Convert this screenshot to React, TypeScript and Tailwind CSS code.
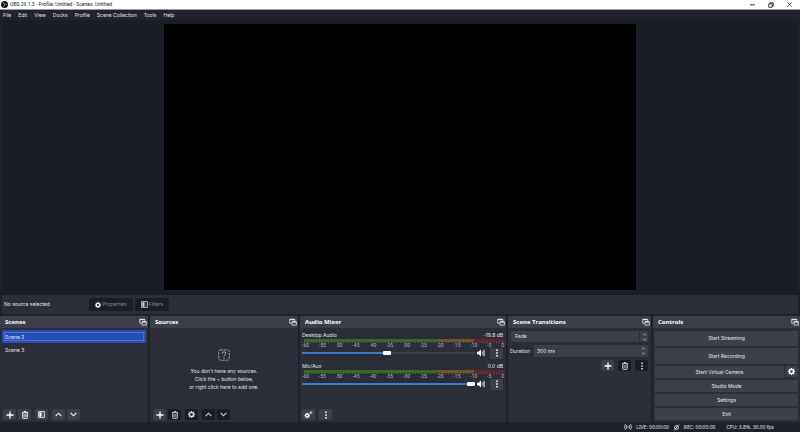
import type { ReactNode } from "react";
import { useState } from "react";
import { clsx } from "clsx";

const menus = ["File", "Edit", "View", "Docks", "Profile", "Scene Collection", "Tools", "Help"];
const meterMarks = ["-60", "-55", "-50", "-45", "-40", "-35", "-30", "-25", "-20", "-15", "-10", "-5", "0"];

function Icon({ className = "size-[7px]", children }: { className?: string; children: ReactNode }) {
  return (
    <svg
      viewBox="0 0 16 16"
      className={clsx("shrink-0", className)}
      fill="none"
      stroke="currentColor"
      strokeWidth="2"
      aria-hidden="true"
    >
      {children}
    </svg>
  );
}

const PlusIcon = () => (
  <Icon className="size-[8px]">
    <path d="M8 1v14M1 8h14" strokeWidth="2.6" />
  </Icon>
);

const TrashIcon = () => (
  <Icon className="size-[8px]">
    <path d="M2 3.2h12M6 3V1.2h4V3M3.4 3.5v10.3q0 1 1 1h7.2q1 0 1-1V3.5" strokeWidth="1.8" />
    <path d="M6.3 6v6.5M9.7 6v6.5" strokeWidth="1.6" />
  </Icon>
);

const GearIcon = ({ className }: { className?: string }) => (
  <Icon className={className}>
    <circle cx="8" cy="8" r="4.5" strokeWidth="3" />
    <path
      d="M8 0v3M8 13v3M0 8h3M13 8h3M2.3 2.3l2 2M11.7 11.7l2 2M13.7 2.3l-2 2M4.3 11.7l-2 2"
      strokeWidth="3"
    />
  </Icon>
);

const FilterIcon = () => (
  <Icon>
    <rect x="1.5" y="1.5" width="13" height="13" strokeWidth="1.8" />
    <rect x="3" y="3" width="5" height="10" fill="currentColor" stroke="none" />
    <path d="M10.5 3v10" strokeWidth="1" opacity=".6" />
  </Icon>
);

const UpIcon = () => (
  <Icon>
    <path d="M1.5 11.5 8 5l6.5 6.5" strokeWidth="2.6" />
  </Icon>
);

const DownIcon = () => (
  <Icon>
    <path d="M1.5 4.5 8 11l6.5-6.5" strokeWidth="2.6" />
  </Icon>
);

const DotsIcon = () => (
  <Icon className="size-[8px]">
    <path d="M8 1v3.2M8 6.4v3.2M8 11.8V15" strokeWidth="3.2" />
  </Icon>
);

const PopOutIcon = () => (
  <Icon className="size-[8px]">
    <path d="M5 10.5H1.5v-8h10V6" strokeWidth="1.6" />
    <path d="M1.5 3.2h10" strokeWidth="2.4" />
    <path d="M6 7.5h8.7v6.7H6z" strokeWidth="1.6" />
    <path d="M6 8h8.7" strokeWidth="2.4" />
  </Icon>
);

const SpeakerIcon = () => (
  <Icon className="size-[8px]">
    <path d="M0 5.5h3L8 1v14l-5-4.5H0z" fill="currentColor" stroke="none" />
    <path d="M10 5q2 3 0 6M12 3q3.5 5 0 10M14 1.2q4 6.8 0 13.6" strokeWidth="1.3" />
  </Icon>
);

const MixerGearsIcon = () => (
  <Icon className="size-[9px]">
    <circle cx="5.8" cy="9.8" r="2.8" strokeWidth="2.6" />
    <path d="M5.8 4.8v10M.8 9.8h10M2.4 6.4l6.8 6.8M9.2 6.4l-6.8 6.8" strokeWidth="1.2" />
    <circle cx="5.8" cy="9.8" r="1.5" fill="#3c404b" stroke="none" />
    <circle cx="12.2" cy="4.6" r="1.5" strokeWidth="1.6" />
  </Icon>
);

function ToolButton({ label, dark, children }: { label: string; dark?: boolean; children: ReactNode }) {
  return (
    <button
      aria-label={label}
      className={clsx(
        "flex h-[11px] w-[13px] shrink-0 items-center justify-center rounded-[2px]",
        dark ? "bg-[#191b26] text-[#d5d6da]" : "bg-[#3c404b] text-white",
      )}
    >
      {children}
    </button>
  );
}

function ListToolbar({ dark, middle }: { dark?: boolean; middle: ReactNode }) {
  return (
    <div className="mt-auto flex gap-[2px] px-[3px] pb-[2px]">
      <ToolButton label="Add">
        <PlusIcon />
      </ToolButton>
      <ToolButton label="Remove" dark={dark}>
        <TrashIcon />
      </ToolButton>
      <div className="mx-[2px]">{middle}</div>
      <ToolButton label="Move up" dark={dark}>
        <UpIcon />
      </ToolButton>
      <ToolButton label="Move down" dark={dark}>
        <DownIcon />
      </ToolButton>
    </div>
  );
}

function Dock({ title, children }: { title: string; children: ReactNode }) {
  return (
    <section className="flex min-w-0 flex-col bg-[#2b2d38]">
      <header className="flex h-[12px] shrink-0 items-center justify-between rounded-t-[1px] bg-[#3c3f4a] pr-px pl-[5px]">
        <h2 className="font-['Open_Sans','Noto_Sans',sans-serif] text-[6px] font-bold text-white">{title}</h2>
        <button aria-label={`Undock ${title}`} className="text-[#e4e5e8]">
          <PopOutIcon />
        </button>
      </header>
      {children}
    </section>
  );
}

function MeterBar() {
  return (
    <div className="flex h-[3px]">
      <div className="w-[67%] bg-[#3f681f]" />
      <div className="w-[18%] bg-[#6f5722]" />
      <div className="w-[15%] bg-[#6a2233]" />
    </div>
  );
}

function MixerChannel({ name, level, initial }: { name: string; level: string; initial: number }) {
  const [volume, setVolume] = useState(initial);

  return (
    <div className="flex h-[31px] flex-col px-[2px]">
      <div className="flex h-[8px] items-center justify-between pr-px leading-[8px]">
        <span>{name}</span>
        <span>{level}</span>
      </div>
      <div className="ml-[2px] flex flex-col">
        <MeterBar />
        <div className="h-px bg-[repeating-linear-gradient(to_right,#5d606a_0_1px,transparent_1px_3px)]" />
      </div>
      <div className="flex h-[5px] justify-between font-['Roboto',sans-serif] leading-[5px] text-[#b4b6bd]">
        {meterMarks.map((mark) => (
          <span key={mark}>{mark}</span>
        ))}
      </div>
      <div className="flex h-[10px] items-center">
        <input
          type="range"
          aria-label={`${name} volume`}
          value={volume}
          onChange={(e) => setVolume(Number(e.target.value))}
          className="h-[2px] min-w-0 flex-1 appearance-none [&::-webkit-slider-thumb]:h-[4px] [&::-webkit-slider-thumb]:w-[8px] [&::-webkit-slider-thumb]:appearance-none [&::-webkit-slider-thumb]:rounded-[1px] [&::-webkit-slider-thumb]:bg-white"
          style={{ background: `linear-gradient(to right, #3b7dc4 ${volume}%, #3c404b ${volume}%)` }}
        />
        <button aria-label={`Mute ${name}`} className="mr-[5px] ml-[2px] text-white">
          <SpeakerIcon />
        </button>
        <div className="mr-px">
          <ToolButton label={`${name} options`}>
            <DotsIcon />
          </ToolButton>
        </div>
      </div>
    </div>
  );
}

function Spinner() {
  return (
    <svg viewBox="0 0 6 10" className="h-[8px] w-[5px]" fill="none" stroke="#c4c6cc" aria-hidden="true">
      <path d="M1 3l2-2 2 2M1 7l2 2 2-2" />
    </svg>
  );
}

const controlButton = "w-full rounded-[1px] bg-[#3c404b] text-center text-[#e6e7ea]";

function TitleBar() {
  return (
    <div className="flex h-[10px] shrink-0 items-center border-b border-[#9c9c9c] bg-white pl-px text-[#222]">
      <svg viewBox="0 0 16 16" className="mr-[2px] size-[7px]" aria-hidden="true">
        <circle cx="8" cy="8" r="8" fill="#111" />
        <path
          d="M7 2.5a3.3 3.3 0 0 0 1 5M13.5 9a3.3 3.3 0 0 0-5.5-1M4.5 12.5A3.3 3.3 0 0 0 8 8"
          fill="none"
          stroke="#ccc"
          strokeWidth="1.4"
        />
      </svg>
      <span className="font-['Roboto',sans-serif]">OBS 29.1.3 - Profile: Untitled - Scenes: Untitled</span>
      <div className="ml-auto flex gap-[13px] pr-[8px] text-black">
        <button aria-label="Minimize">
          <Icon className="size-[5px]">
            <path d="M0 9h16" strokeWidth="2.5" />
          </Icon>
        </button>
        <button aria-label="Restore">
          <Icon className="size-[6px]">
            <path d="M2 5h9v9H2zM5 5V2h9v9h-3" />
          </Icon>
        </button>
        <button aria-label="Close">
          <Icon className="size-[5px]">
            <path d="m1 1 14 14M15 1 1 15" />
          </Icon>
        </button>
      </div>
    </div>
  );
}

export default function App() {
  const [scene, setScene] = useState("Scene 2");

  return (
    <div className="flex h-screen flex-col overflow-hidden bg-[#1e202a] font-['Inter','Open_Sans',sans-serif] text-[5px] leading-[7px] whitespace-nowrap text-[#e6e7ea]">
      <TitleBar />

      <nav className="flex h-[10px] shrink-0 items-center gap-[7px] bg-[#1f242c] pl-[3px]">
        {menus.map((menu) => (
          <button key={menu}>{menu}</button>
        ))}
      </nav>

      <main className="mx-[2px] flex min-h-0 flex-1 justify-center bg-[#1a1c27] pt-[4px] pb-[5px]">
        <div className="aspect-video h-full bg-black" />
      </main>

      <div className="mx-[2px] flex h-[19px] shrink-0 items-center bg-[#2b2d38] pl-[2px]">
        <span className="w-[85px]">No source selected</span>
        <button className="flex h-[13px] w-[44px] items-center justify-center gap-px rounded-[2px] bg-[#1b1d28] text-[#85878f]">
          <span className="text-white">
            <GearIcon className="size-[6px]" />
          </span>
          Properties
        </button>
        <button className="ml-[2px] flex h-[13px] w-[34px] items-center justify-center gap-px rounded-[2px] bg-[#1b1d28] text-[#85878f]">
          <span className="text-[#d5d6da]">
            <FilterIcon />
          </span>
          Filters
        </button>
      </div>

      <div className="mt-[2px] grid min-h-[106px] shrink-0 grid-cols-[148fr_148fr_206fr_143fr_147fr] gap-[2px]">
        <Dock title="Scenes">
          <ul className="mt-[2px] px-[2px]">
            {["Scene 2", "Scene 3"].map((name) => (
              <li key={name}>
                <button
                  onClick={() => setScene(name)}
                  className={clsx(
                    "block h-[13px] w-full rounded-[1px] p-[2px] text-left",
                    scene === name && "bg-[#284cb8]",
                  )}
                >
                  <span
                    className={clsx(
                      "block h-[9px] border leading-[8px]",
                      scene === name ? "border-[#4d70d4]" : "border-transparent",
                    )}
                  >
                    {name}
                  </span>
                </button>
              </li>
            ))}
          </ul>
          <ListToolbar
            middle={
              <ToolButton label="Scene filters">
                <FilterIcon />
              </ToolButton>
            }
          />
        </Dock>

        <Dock title="Sources">
          <div className="mt-[21px] flex flex-col items-center text-center">
            <svg
              viewBox="0 0 24 24"
              className="size-[12px]"
              fill="none"
              stroke="#b0b2b9"
              strokeWidth="1.8"
              aria-hidden="true"
            >
              <rect x="1.5" y="1.5" width="21" height="21" rx="4" strokeDasharray="5 2" />
              <path d="M8.5 9.2q0-3.7 3.5-3.7t3.5 3.2q0 1.8-1.8 3Q12 12.8 12 14.5M12 16.5v2.3" strokeWidth="2" />
            </svg>
            <p className="mt-[6px] leading-[8px]">
              You don't have any sources.
              <br />
              Click the + button below,
              <br />
              or right click here to add one.
            </p>
          </div>
          <ListToolbar
            dark
            middle={
              <ToolButton label="Source properties" dark>
                <GearIcon className="size-[7px]" />
              </ToolButton>
            }
          />
        </Dock>

        <Dock title="Audio Mixer">
          <div className="mt-[3px]">
            <MixerChannel name="Desktop Audio" level="-19.8 dB" initial={49} />
            <MixerChannel name="Mic/Aux" level="0.0 dB" initial={100} />
          </div>
          <div className="mt-auto flex gap-[4px] px-[2px] pb-[2px]">
            <ToolButton label="Advanced audio properties">
              <MixerGearsIcon />
            </ToolButton>
            <ToolButton label="Audio mixer menu">
              <DotsIcon />
            </ToolButton>
          </div>
        </Dock>

        <Dock title="Scene Transitions">
          <div className="mt-[3px] flex flex-col gap-[3px] pr-[3px] pl-[2px]">
            <div className="relative ml-px">
              <select
                aria-label="Transition"
                className="block h-[11px] w-full appearance-none rounded-[1px] bg-[#3c404b] pl-[4px]"
              >
                <option>Fade</option>
              </select>
              <span className="pointer-events-none absolute inset-y-0 right-0 flex w-[9px] items-center justify-center border-l border-[#2b2d38]">
                <Spinner />
              </span>
            </div>
            <div className="flex items-center">
              <label htmlFor="duration" className="w-[24px]">
                Duration
              </label>
              <div className="relative min-w-0 flex-1">
                <input
                  id="duration"
                  defaultValue="300 ms"
                  className="block h-[12px] w-full rounded-[1px] bg-[#3c404b] pl-[3px]"
                />
                <span className="pointer-events-none absolute inset-y-0 right-0 flex w-[9px] items-center justify-center">
                  <Spinner />
                </span>
              </div>
            </div>
            <div className="flex justify-end gap-[4px]">
              <ToolButton label="Add transition">
                <PlusIcon />
              </ToolButton>
              <ToolButton label="Remove transition" dark>
                <TrashIcon />
              </ToolButton>
              <ToolButton label="Transition options" dark>
                <DotsIcon />
              </ToolButton>
            </div>
          </div>
        </Dock>

        <Dock title="Controls">
          <div className="flex flex-1 flex-col gap-[2px] px-[2px] pt-[3px] pb-[2px]">
            <button className={clsx(controlButton, "h-[15px]")}>Start Streaming</button>
            <button className={clsx(controlButton, "h-[16px]")}>Start Recording</button>
            <div className="flex gap-px">
              <button className={clsx(controlButton, "h-[12px]")}>Start Virtual Camera</button>
              <ToolButton label="Virtual camera settings">
                <GearIcon />
              </ToolButton>
            </div>
            <button className={clsx(controlButton, "h-[12px]")}>Studio Mode</button>
            <button className={clsx(controlButton, "h-[12px]")}>Settings</button>
            <button className={clsx(controlButton, "h-[12px]")}>Exit</button>
          </div>
        </Dock>
      </div>

      <footer className="flex h-[10px] shrink-0 items-center justify-end gap-[4px] pr-[26px] font-['Noto_Sans','Open_Sans',sans-serif]">
        <Icon className="size-[8px]">
          <path d="M3 2q-4 6 0 12M13 2q4 6 0 12M5.5 4q-2 4 0 8M10.5 4q2 4 0 8" strokeWidth="1.4" />
          <circle cx="8" cy="8" r="1.4" fill="currentColor" stroke="none" />
        </Icon>
        <span>LIVE: 00:00:00</span>
        <Icon className="size-[7px]">
          <circle cx="8" cy="8" r="4.5" />
          <circle cx="8" cy="8" r="1.5" fill="currentColor" stroke="none" />
          <path d="M2 15 14 1" strokeWidth="1.6" />
        </Icon>
        <span className="mr-[7px]">REC: 00:00:00</span>
        <span>CPU: 3.8%, 30.00 fps</span>
      </footer>
    </div>
  );
}
